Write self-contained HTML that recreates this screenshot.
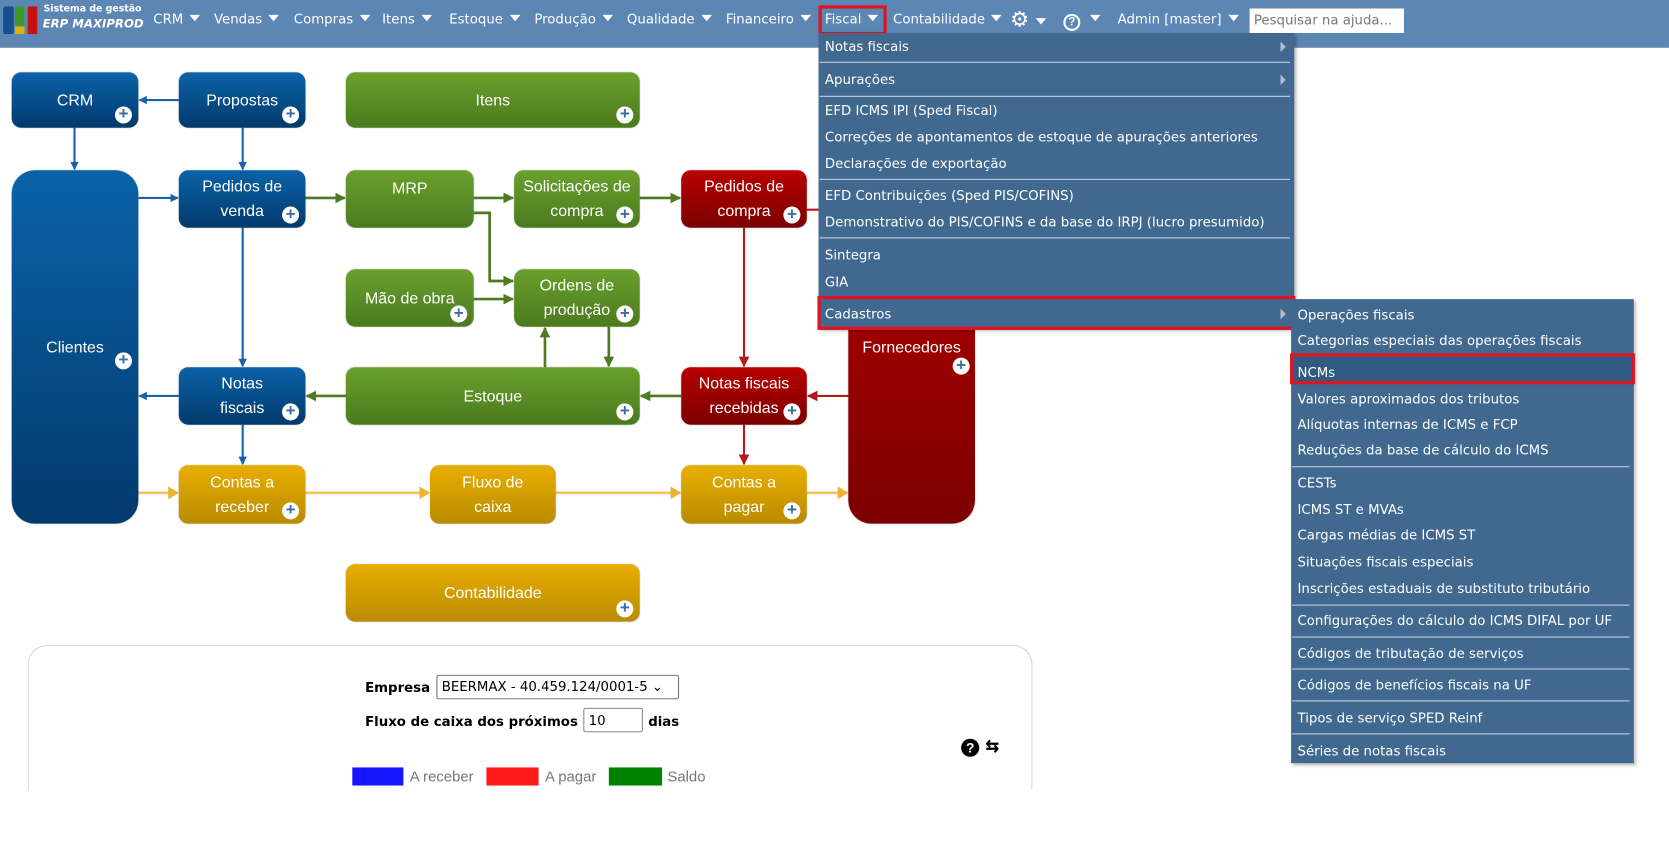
<!DOCTYPE html>
<html><head><meta charset="utf-8"><style>
*{margin:0;padding:0;box-sizing:border-box}
body{width:1669px;height:809px;background:#fff;position:relative;overflow:hidden;font-family:"Liberation Sans",Arial,sans-serif}
#w{position:absolute;left:0;top:0;width:1568px;height:760px;transform:scale(1.0644);transform-origin:0 0}
.nav{position:absolute;left:0;top:0;width:1568px;height:45px;background:#5c86b4;border-bottom:1px solid #8a9fb8}
.nv{position:absolute;top:10px;color:#fff;font-family:"DejaVu Sans",Verdana,sans-serif;font-size:12.5px}
.tri{display:inline-block;width:0;height:0;border-left:5px solid transparent;border-right:5px solid transparent;border-top:6px solid #fff;margin-left:6px;vertical-align:2px}
.b{position:absolute;border-radius:9px;color:#fff;font-size:15px;text-align:center;display:flex;align-items:center;justify-content:center;line-height:23px;box-shadow:0 0 1px rgba(0,0,0,.3)}
.bl{background:linear-gradient(#0b62a8,#023a6d)}
.gr{background:linear-gradient(#6aa02c,#4b7a1f)}
.rd{background:linear-gradient(#b80000,#7c0000)}
.yl{background:linear-gradient(#e8ae00,#b98b00)}
.p{position:absolute;right:6px;bottom:4px;width:16px;height:16px;border-radius:50%;background:#fff;color:#3d6ea3;font-weight:bold;font-size:16px;line-height:16px;text-align:center}
.menu{position:absolute;background:#41688f;font-family:"DejaVu Sans",Verdana,sans-serif;font-size:12.5px;color:#fff;box-shadow:2px 2px 3px rgba(0,0,0,.25)}
.mi{position:absolute;left:6px;white-space:nowrap}
.sep{position:absolute;left:1px;right:4px;height:1px;background:#c4d2e0}
.arr{position:absolute;right:8px;width:0;height:0;border-top:5px solid transparent;border-bottom:5px solid transparent;border-left:5px solid #b0bccb}
.redbox{position:absolute;border:3px solid #e0141e}
</style></head><body><div id="w">
<div class="nav">
<div style="position:absolute;left:3px;top:6px;width:10px;height:26px;background:#174f8e;border-radius:2px"></div>
<div style="position:absolute;left:14px;top:6px;width:9px;height:18px;background:#3d9a2a"></div>
<div style="position:absolute;left:14px;top:25px;width:9px;height:7px;background:#e0b000"></div>
<div style="position:absolute;left:26px;top:6px;width:9px;height:26px;background:#c81010"></div>
<div style="position:absolute;left:41px;top:4px;color:#fff;font-family:'DejaVu Sans',sans-serif;font-size:8.8px;font-weight:bold">Sistema de gestão</div>
<div style="position:absolute;left:40px;top:16px;color:#fff;font-family:'DejaVu Sans',sans-serif;font-size:11px;font-weight:bold;font-style:italic">ERP MAXIPROD</div>
<div class="nv" style="left:144px">CRM<span class="tri"></span></div>
<div class="nv" style="left:201px">Vendas<span class="tri"></span></div>
<div class="nv" style="left:276px">Compras<span class="tri"></span></div>
<div class="nv" style="left:359px">Itens<span class="tri"></span></div>
<div class="nv" style="left:422px">Estoque<span class="tri"></span></div>
<div class="nv" style="left:502px">Produção<span class="tri"></span></div>
<div class="nv" style="left:589px">Qualidade<span class="tri"></span></div>
<div class="nv" style="left:682px">Financeiro<span class="tri"></span></div>
<div class="nv" style="left:775px">Fiscal<span class="tri"></span></div>
<div class="nv" style="left:839px">Contabilidade<span class="tri"></span></div>
<div class="nv" style="left:949px;top:7px;font-size:20px;line-height:22px">⚙<span class="tri"></span></div>
<div style="position:absolute;left:999px;top:13px;width:16px;height:16px;border:2px solid #fff;border-radius:50%;color:#fff;font-size:11px;font-weight:bold;text-align:center;line-height:12px">?</div>
<div class="nv" style="left:1018px"><span class="tri"></span></div>
<div class="nv" style="left:1050px">Admin [master]<span class="tri"></span></div>
<div style="position:absolute;left:1174px;top:8px;width:145px;height:23px;background:#fff;color:#777;font-family:'DejaVu Sans',sans-serif;font-size:12.5px;padding:3px 4px;white-space:nowrap;overflow:hidden">Pesquisar na ajuda...</div>
</div>
<div class="redbox" style="left:769px;top:5px;width:64px;height:28px"></div>

<svg style="position:absolute;left:0;top:0" width="1568" height="760">
<defs>
<marker id="mb" markerWidth="8" markerHeight="8" refX="7" refY="4" orient="auto" markerUnits="userSpaceOnUse"><path d="M0,0L8,4L0,8z" fill="#1a63a8"/></marker>
<marker id="mg" markerWidth="10" markerHeight="10" refX="9" refY="5" orient="auto" markerUnits="userSpaceOnUse"><path d="M0,0L10,5L0,10z" fill="#4d7a22"/></marker>
<marker id="mr" markerWidth="10" markerHeight="10" refX="9" refY="5" orient="auto" markerUnits="userSpaceOnUse"><path d="M0,0L10,5L0,10z" fill="#b01c1c"/></marker>
<marker id="my" markerWidth="10" markerHeight="12" refX="9" refY="6" orient="auto" markerUnits="userSpaceOnUse"><path d="M0,0L10,6L0,12z" fill="#f0b030"/></marker>
</defs>
<g stroke="#1a63a8" stroke-width="2" fill="none" marker-end="url(#mb)">
<path d="M168,94H131"/><path d="M70,120V159"/><path d="M228,120V159"/><path d="M130,186H167"/><path d="M228,214V344"/><path d="M168,372H131"/><path d="M228,399V436"/>
</g>
<g stroke="#4d7a22" stroke-width="2.5" fill="none" marker-end="url(#mg)">
<path d="M287,186H324"/><path d="M445,186H482"/><path d="M601,186H639"/><path d="M445,200H460V264H482"/><path d="M445,281H482"/><path d="M512,345V308"/><path d="M572,307V344"/><path d="M325,372H288"/><path d="M640,372H602"/>
</g>
<g stroke="#b01c1c" stroke-width="2" fill="none" marker-end="url(#mr)">
<path d="M699,214V344"/><path d="M797,372H759"/><path d="M699,399V436"/>
</g>
<path d="M758,197H770" stroke="#b01c1c" stroke-width="2"/>
<g stroke="#f5c35a" stroke-width="2.5" fill="none" marker-end="url(#my)">
<path d="M130,463H167"/><path d="M287,463H403"/><path d="M522,463H639"/><path d="M758,463H796"/>
</g>
</svg>

<div class="b bl" style="left:11px;top:68px;width:119px;height:52px">CRM<span class="p">+</span></div>
<div class="b bl" style="left:168px;top:68px;width:119px;height:52px">Propostas<span class="p">+</span></div>
<div class="b gr" style="left:325px;top:68px;width:276px;height:52px">Itens<span class="p">+</span></div>
<div class="b bl" style="left:11px;top:160px;width:119px;height:332px;border-radius:22px">Clientes<span class="p" style="bottom:145px">+</span></div>
<div class="b bl" style="left:168px;top:160px;width:119px;height:54px">Pedidos de<br>venda<span class="p">+</span></div>
<div class="b gr" style="left:325px;top:160px;width:120px;height:54px;align-items:flex-start;padding-top:6px">MRP</div>
<div class="b gr" style="left:483px;top:160px;width:118px;height:54px">Solicitações de<br>compra<span class="p">+</span></div>
<div class="b rd" style="left:640px;top:160px;width:118px;height:54px">Pedidos de<br>compra<span class="p">+</span></div>
<div class="b gr" style="left:325px;top:253px;width:120px;height:54px">Mão de obra<span class="p">+</span></div>
<div class="b gr" style="left:483px;top:253px;width:118px;height:54px">Ordens de<br>produção<span class="p">+</span></div>
<div class="b bl" style="left:168px;top:345px;width:119px;height:54px">Notas<br>fiscais<span class="p">+</span></div>
<div class="b gr" style="left:325px;top:345px;width:276px;height:54px">Estoque<span class="p">+</span></div>
<div class="b rd" style="left:640px;top:345px;width:118px;height:54px">Notas fiscais<br>recebidas<span class="p">+</span></div>
<div class="b rd" style="left:797px;top:160px;width:119px;height:332px;border-radius:22px;align-items:flex-start;padding-top:155px">Fornecedores<span class="p" style="bottom:140px;right:5px">+</span></div>
<div class="b yl" style="left:168px;top:437px;width:119px;height:55px">Contas a<br>receber<span class="p">+</span></div>
<div class="b yl" style="left:404px;top:437px;width:118px;height:55px">Fluxo de<br>caixa</div>
<div class="b yl" style="left:640px;top:437px;width:118px;height:55px">Contas a<br>pagar<span class="p">+</span></div>
<div class="b yl" style="left:325px;top:530px;width:276px;height:54px">Contabilidade<span class="p">+</span></div>

<div style="position:absolute;left:26px;top:606px;width:944px;height:160px;border:1px solid #d6d6d6;border-bottom:none;border-radius:18px 18px 0 0"></div>
<div style="position:absolute;left:20px;top:742px;width:960px;height:70px;background:#fff"></div>
<div style="position:absolute;left:343px;top:638px;font-family:'DejaVu Sans',sans-serif;font-size:12.5px;font-weight:bold">Empresa</div>
<div style="position:absolute;left:410px;top:634px;width:228px;height:23px;border:1px solid #777;border-radius:2px;font-family:'DejaVu Sans',sans-serif;font-size:12.5px;padding:2px 4px;white-space:nowrap">BEERMAX - 40.459.124/0001-5 ⌄</div>
<div style="position:absolute;left:343px;top:670px;font-family:'DejaVu Sans',sans-serif;font-size:12.5px;font-weight:bold">Fluxo de caixa dos próximos</div>
<div style="position:absolute;left:548px;top:665px;width:56px;height:23px;border:1px solid #888;border-radius:2px;font-family:'DejaVu Sans',sans-serif;font-size:12.5px;padding:3px 4px">10</div>
<div style="position:absolute;left:609px;top:670px;font-family:'DejaVu Sans',sans-serif;font-size:12.5px;font-weight:bold">dias</div>
<div style="position:absolute;left:903px;top:694px;width:17px;height:17px;border-radius:50%;background:#000;color:#fff;font-weight:bold;font-size:13px;text-align:center;line-height:17px">?</div>
<div style="position:absolute;left:926px;top:692px;font-size:15px;font-weight:bold">⇆</div>
<div style="position:absolute;left:331px;top:721px;width:48px;height:17px;background:#1616ff"></div>
<div style="position:absolute;left:385px;top:721px;color:#777;font-size:14px">A receber</div>
<div style="position:absolute;left:457px;top:721px;width:49px;height:17px;background:#ff1a1a"></div>
<div style="position:absolute;left:512px;top:721px;color:#777;font-size:14px">A pagar</div>
<div style="position:absolute;left:572px;top:721px;width:50px;height:17px;background:#008000"></div>
<div style="position:absolute;left:627px;top:721px;color:#777;font-size:14px">Saldo</div>

<div class="menu" style="left:769px;top:31px;width:447px;height:278px">
<div class="mi" style="top:5px">Notas fiscais</div><div class="arr" style="top:8px"></div>
<div class="sep" style="top:27px"></div>
<div class="mi" style="top:36px">Apurações</div><div class="arr" style="top:39px"></div>
<div class="sep" style="top:59px"></div>
<div class="mi" style="top:65px">EFD ICMS IPI (Sped Fiscal)</div>
<div class="mi" style="top:90px">Correções de apontamentos de estoque de apurações anteriores</div>
<div class="mi" style="top:115px">Declarações de exportação</div>
<div class="sep" style="top:137px"></div>
<div class="mi" style="top:145px">EFD Contribuições (Sped PIS/COFINS)</div>
<div class="mi" style="top:170px">Demonstrativo do PIS/COFINS e da base do IRPJ (lucro presumido)</div>
<div class="sep" style="top:192px"></div>
<div class="mi" style="top:201px">Sintegra</div>
<div class="mi" style="top:226px">GIA</div>
<div class="mi" style="top:256px">Cadastros</div><div class="arr" style="top:259px"></div>
</div>
<div class="redbox" style="left:768px;top:278px;width:449px;height:32px"></div>

<div class="menu" style="left:1213px;top:281px;width:322px;height:436px">
<div class="mi" style="top:7px">Operações fiscais</div>
<div class="mi" style="top:31px">Categorias especiais das operações fiscais</div>
<div style="position:absolute;left:0;top:53px;width:322px;height:26px;background:#305a82"></div>
<div class="mi" style="top:61px">NCMs</div>
<div class="mi" style="top:86px">Valores aproximados dos tributos</div>
<div class="mi" style="top:110px">Alíquotas internas de ICMS e FCP</div>
<div class="mi" style="top:134px">Reduções da base de cálculo do ICMS</div>
<div class="sep" style="top:157px"></div>
<div class="mi" style="top:165px">CESTs</div>
<div class="mi" style="top:190px">ICMS ST e MVAs</div>
<div class="mi" style="top:214px">Cargas médias de ICMS ST</div>
<div class="mi" style="top:239px">Situações fiscais especiais</div>
<div class="mi" style="top:264px">Inscrições estaduais de substituto tributário</div>
<div class="sep" style="top:287px"></div>
<div class="mi" style="top:294px">Configurações do cálculo do ICMS DIFAL por UF</div>
<div class="sep" style="top:317px"></div>
<div class="mi" style="top:325px">Códigos de tributação de serviços</div>
<div class="sep" style="top:347px"></div>
<div class="mi" style="top:355px">Códigos de benefícios fiscais na UF</div>
<div class="sep" style="top:377px"></div>
<div class="mi" style="top:386px">Tipos de serviço SPED Reinf</div>
<div class="sep" style="top:408px"></div>
<div class="mi" style="top:417px">Séries de notas fiscais</div>
</div>
<div class="redbox" style="left:1212px;top:332px;width:324px;height:29px"></div>
</div></body></html>
